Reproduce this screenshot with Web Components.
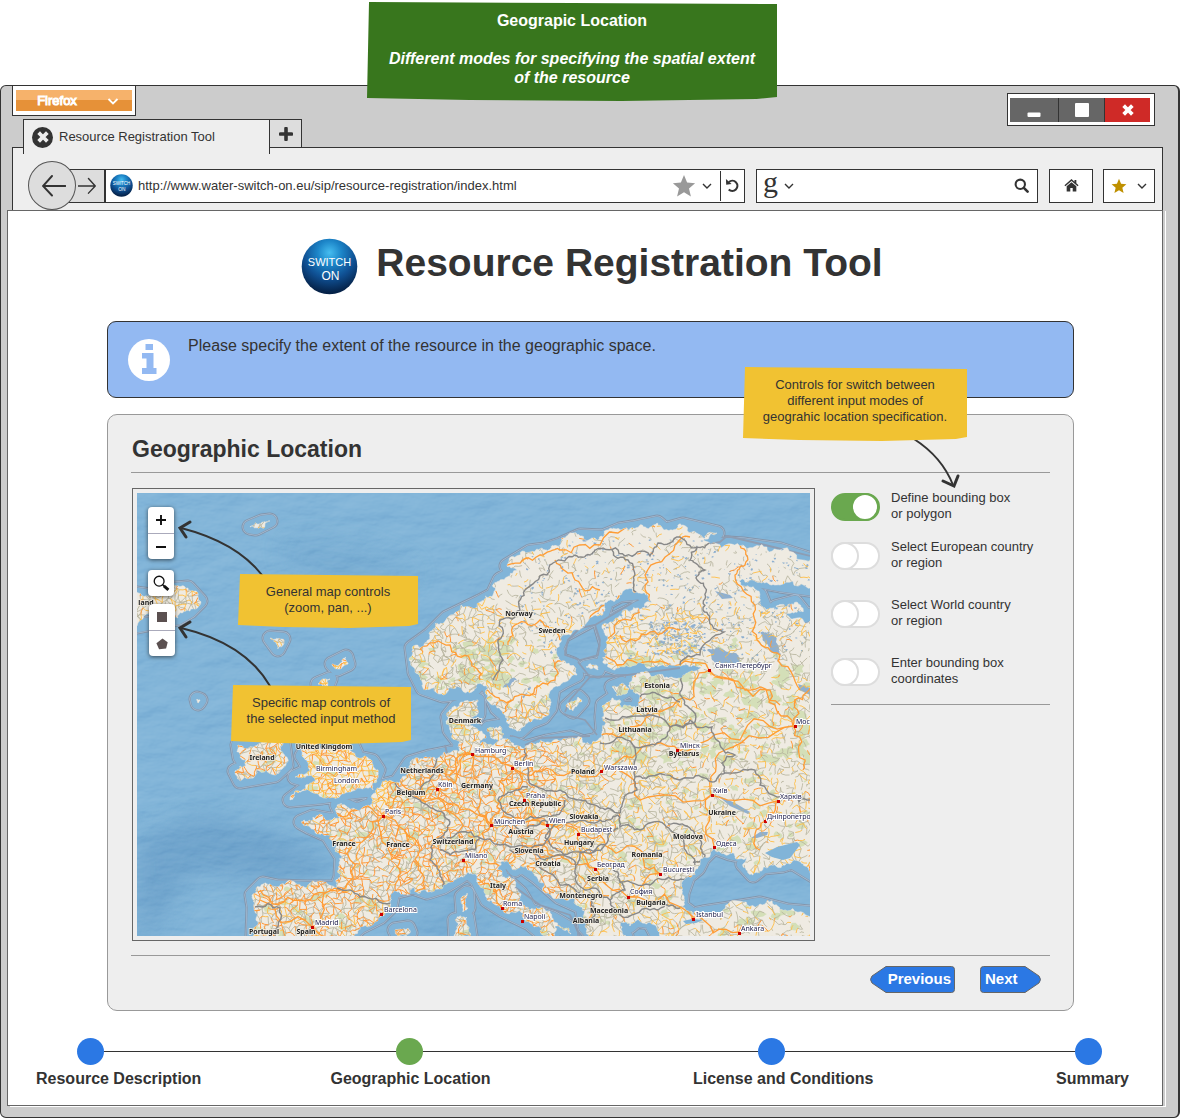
<!DOCTYPE html>
<html lang="en">
<head>
<meta charset="utf-8">
<title>Resource Registration Tool</title>
<style>
  body { margin: 0; background: #fff; color: #333; font: 13px/16px "Liberation Sans", Arial, sans-serif; }
</style>
</head>
<body>
<registration-app></registration-app>

<script>
const define = (name, html, setup) => {
  const tpl = document.createElement('template');
  tpl.innerHTML = html;
  customElements.define(name, class extends HTMLElement {
    connectedCallback() {
      if (this.shadowRoot) return;
      this.attachShadow({ mode: 'open' }).append(tpl.content.cloneNode(true));
      if (setup) setup(this, this.shadowRoot);
    }
  });
};

/* ---------- icons ---------- */
const ICONS = {
  chevron: ['0 0 12 12', '<path d="M2 4l4 4 4-4" fill="none" stroke="currentColor" stroke-width="1.4"/>'],
  boldchevron: ['0 0 12 12', '<path d="M1.500 4L6 8.500 10.500 4" fill="none" stroke="currentColor" stroke-width="1.800"/>'],
  star: ['0 0 24 24', '<path d="M12 1l3.1 7.6 8 .6-6.1 5.3 1.9 8L12 18.200l-6.900 4.300 1.900-8L.9 9.200l8-.6z" fill="currentColor"/>'],
  reload: ['0 0 16 16', '<path d="M4.200 4.300A5.400 5.400 0 1 1 4 12.200" fill="none" stroke="currentColor" stroke-width="2.300"/><path d="M1 1l.3 6.200 5.700-.8z" fill="currentColor"/>'],
  search: ['0 0 16 16', '<circle cx="6.700" cy="6.700" r="5" fill="none" stroke="currentColor" stroke-width="2.200"/><path d="M10.500 10.500l4 4" stroke="currentColor" stroke-width="2.800" stroke-linecap="round"/>'],
  lens: ['0 0 18 18', '<circle cx="6.500" cy="6.500" r="5.200" fill="none" stroke="currentColor" stroke-width="1.400"/><path d="M10 10l2 2" stroke="currentColor" stroke-width="1.500"/><path d="M11.500 11.500l4.800 4.300" stroke="currentColor" stroke-width="3"/>'],
  home: ['0 0 16 14', '<path d="M8 0L.4 6.800l1 1.100L8 2.200l6.600 5.700 1-1.100-2.400-2.100V1h-2v1.900z" fill="currentColor"/><path d="M8 3.400L2.800 7.900V13.500h3.900V9.600h2.600v3.900h3.900V7.900z" fill="currentColor"/>'],
  plus: ['0 0 14 14', '<path d="M7 1.500v11M1.500 7h11" stroke="currentColor" stroke-width="3.600" stroke-linecap="round"/>'],
  thinplus: ['0 0 12 12', '<path d="M6 1v10M1 6h10" stroke="currentColor" stroke-width="1.900"/>'],
  thinminus: ['0 0 12 12', '<path d="M1 6h10" stroke="currentColor" stroke-width="2"/>'],
  close: ['0 0 12 12', '<path d="M3 3l6 6M9 3l-6 6" stroke="currentColor" stroke-width="3.800" stroke-linecap="square"/>'],
  min: ['0 0 14 14', '<rect x=".5" y="9.500" width="13" height="4.500" rx="1" fill="currentColor"/>'],
  max: ['0 0 14 14', '<rect width="14" height="14" rx="1" fill="currentColor"/>'],
  back: ['0 0 24 22', '<path d="M23.500 11H1M10 1L1 11l9 9.500" fill="none" stroke="currentColor" stroke-width="1.900" stroke-linecap="round"/>'],
  square: ['0 0 12 12', '<rect x="1" y="1" width="10" height="10" fill="currentColor"/>'],
  pentagon: ['0 0 12 12', '<path d="M6.500 .5l5.200 3.700-1.600 6.300-7 .8L.4 5.300z" fill="currentColor"/>'],
  info: ['0 0 42 42', '<circle cx="21" cy="21" r="21" fill="#fff"/><path d="M17.500 5h7.500v6h-7.500zM14 14h11.500v15h3v6H14v-6h4.500v-9.500H14z" fill="#93b9f2"/>'],
};
define('ui-icon', `<style>
  :host { display: inline-block; flex: none; width: var(--w, 12px); height: var(--h, var(--w, 12px)); line-height: 0; }
  svg { display: block; width: 100%; height: 100%; }
</style><svg aria-hidden="true"></svg>`, (el, root) => {
  const [box, body] = ICONS[el.getAttribute('name')];
  const svg = root.querySelector('svg');
  svg.setAttribute('viewBox', box);
  svg.innerHTML = body;
});

define('switch-logo', `<style>
  :host { display: block; flex: none; width: var(--size); height: var(--size); }
  svg { display: block; width: 100%; height: 100%; }
  text { font-family: "Liberation Sans", sans-serif; fill: #fff; text-anchor: middle; }
</style>
<svg viewBox="0 0 56 57" role="img" aria-label="Switch On">
  <defs><radialGradient id="g" cx=".5" cy=".25" r=".72">
    <stop offset="0" stop-color="#46bdf0"/><stop offset=".3" stop-color="#1c85c8"/>
    <stop offset=".65" stop-color="#0f4f92"/><stop offset="1" stop-color="#052248"/>
  </radialGradient></defs>
  <circle cx="28" cy="28.500" r="27.800" fill="url(#g)"/>
  <text x="28" y="28" font-size="11">SWITCH</text><text x="29" y="42" font-size="12">ON</text>
</svg>`);

/* ---------- sticky note ---------- */
define('sticky-note', `<style>
  :host { display: block; box-sizing: border-box; padding: 10px 8px; text-align: center; color: #333;
    background: #f1c232; font-size: 13px; line-height: 16px;
    clip-path: polygon(2px 0, 50% 1px, 100% 2px, 100% calc(100% - 4px), 95% calc(100% - 2px), 62% 100%, 25% calc(100% - 1px), 0 calc(100% - 3px)); }
  :host([tone="green"]) { background: #38761d; color: #fff; font-size: 16px; line-height: 19px; font-weight: bold; padding: 9px 16px; }
</style><slot></slot>`);

/* ---------- browser chrome ---------- */
define('browser-window', `<style>
  :host { display: block; box-sizing: border-box; border: 1px solid #333; border-right-width: 2px; border-radius: 6px; background: #ccc; padding: 0 15px 11px 6px; }
  button { font: inherit; color: inherit; margin: 0; padding: 0; border: 0; background: none; display: flex; align-items: center; justify-content: center; }
  .title { display: flex; justify-content: space-between; align-items: flex-start; height: 33px; padding: 0 8px 0 5px; }
  .menu { border: 1px solid #333; border-top: 0; background: #fff; padding: 4px 3px; display: flex; }
  .menu button { width: 116px; height: 21px; gap: 30px; padding-left: 8px; color: #fff; font-size: 13px; line-height: 19px; -webkit-text-stroke: 1px #fff; background: linear-gradient(#f6b26b 48%, #e69138 48%); }
  .controls { display: flex; margin-top: 7px; border: 1px solid #333; background: #fff; padding: 4px 4px 3px 2px; }
  .controls button { box-sizing: border-box; width: 49px; height: 24px; background: #666; color: #fff; border-right: 1px solid #333; }
  .controls button + button { width: 46px; }
  .controls button:last-child { width: 45px; background: #cf2a27; border: 0; }
  .tabs { display: flex; align-items: flex-start; padding-left: 16px; position: relative; height: 28px; }
  .tab { box-sizing: border-box; width: 247px; height: 35px; border: 1px solid #333; border-bottom: 0; background: #eee; display: flex; align-items: center; gap: 6px; padding-left: 8px; }
  .tab button { width: 21px; height: 21px; border-radius: 50%; background: #333; color: #eee; }
  .tabs .add { width: 32px; height: 28px; border: 1px solid #333; border-width: 1px 1px 0 0; background: #ddd; }
  .bar { margin: 0 0 0 5px; box-sizing: border-box; height: 63px; border: 1px solid #333; border-bottom: 0; background: #eee; padding: 13px 7px 0 15px; display: flex; align-items: center; }
  .bar .back { box-sizing: border-box; width: 48px; height: 49px; flex: none; border: 1px solid #555; border-radius: 50%; background: #ddd; z-index: 1; padding-left: 3px; }
  .bar .fwd { box-sizing: border-box; width: 45px; height: 34px; margin-left: -16px; flex: none; border: 1px solid #333; background: #ddd; padding-left: 8px; }
  .fwd ui-icon { transform: scaleX(-1); }
  .field { box-sizing: border-box; height: 34px; border: 1px solid #333; background: #fff; display: flex; align-items: center; min-width: 0; }
  .url { flex: 634 1 0; padding-left: 4px; }
  .find { flex: 266 1 0; margin: 0 11px; padding: 0 8px 0 6px; }
  input { flex: 1; min-width: 0; border: 0; outline: 0; padding: 0; background: none; font: inherit; color: inherit; margin-left: 5px; }
  .url .reload { height: 30px; width: 24px; margin-left: 7px; border-left: 1px solid #333; }
  .g { font: 30px/20px "Liberation Serif", serif; padding-bottom: 7px; margin-right: 5px; }
  .bar .home { width: 44px; border: 1px solid #333; background: #fff; }
  .bar .marks { width: 52px; margin-left: 10px; gap: 9px; border: 1px solid #333; background: #fff; }
  .page { box-sizing: border-box; border: 1px solid #666; background: #fff; box-shadow: 2px 0 0 #ccc, 3px 1px 0 #fff; position: relative; }
</style>
<header class="title">
  <div class="menu"><button>Firefox <ui-icon name="boldchevron"></ui-icon></button></div>
  <div class="controls">
    <button aria-label="Minimise"><ui-icon name="min" style="--w:14px"></ui-icon></button>
    <button aria-label="Maximise"><ui-icon name="max" style="--w:14px"></ui-icon></button>
    <button aria-label="Close"><ui-icon name="close"></ui-icon></button>
  </div>
</header>
<div class="tabs">
  <div class="tab"><button aria-label="Close tab"><ui-icon name="close"></ui-icon></button><span>Resource Registration Tool</span></div>
  <button class="add" aria-label="New tab"><ui-icon name="plus" style="--w:14px"></ui-icon></button>
</div>
<div class="bar">
  <button class="back" aria-label="Back"><ui-icon name="back" style="--w:24px;--h:22px"></ui-icon></button>
  <button class="fwd" aria-label="Forward"><ui-icon name="back" style="--w:18px;--h:18px"></ui-icon></button>
  <div class="field url">
    <switch-logo style="--size:23px"></switch-logo>
    <input aria-label="Address" value="http://www.water-switch-on.eu/sip/resource-registration/index.html">
    <ui-icon name="star" style="--w:24px;color:#999"></ui-icon>
    <ui-icon name="chevron" style="margin-left:5px"></ui-icon>
    <button class="reload" aria-label="Reload"><ui-icon name="reload" style="--w:15px"></ui-icon></button>
  </div>
  <div class="field find">
    <span class="g">g</span><ui-icon name="chevron"></ui-icon>
    <input aria-label="Search">
    <ui-icon name="search" style="--w:15px"></ui-icon>
  </div>
  <button class="field home" aria-label="Home"><ui-icon name="home" style="--w:15px;--h:13px"></ui-icon></button>
  <button class="field marks" aria-label="Bookmarks"><ui-icon name="star" style="--w:16px;color:#bf9000"></ui-icon><ui-icon name="chevron"></ui-icon></button>
</div>
<main class="page"><slot></slot></main>`);

/* ---------- banner ---------- */
define('info-banner', `<style>
  :host { display: flex; align-items: flex-start; gap: 18px; box-sizing: border-box; border: 1px solid #333; border-radius: 9px; background: #93b9f2; padding: 17px 20px 16px; font-size: 16px; line-height: 19px; }
  p { margin: -3px 0 0; }
</style><ui-icon name="info" style="--w:42px"></ui-icon><p><slot></slot></p>`);

/* ---------- switch option ---------- */
define('mode-option', `<style>
  :host { display: block; }
  label { display: flex; gap: 11px; align-items: flex-start; }
  input { appearance: none; flex: none; position: relative; box-sizing: border-box; width: 49px; height: 28px; margin: 3px 0 0; border: 2px solid #ddd; border-radius: 14px; background: #fff; }
  input::before { content: ""; position: absolute; box-sizing: border-box; left: -2px; top: -2px; width: 28px; height: 28px; border: 2px solid #ddd; border-radius: 50%; background: #fff; }
  input:checked { background: #6aa84f; border-color: #6aa84f; }
  input:checked::before { left: auto; right: -1px; border-color: #6aa84f; }
</style><label><input type="checkbox" role="switch"><span><slot></slot></span></label>`, (el, root) => {
  root.querySelector('input').checked = el.hasAttribute('on');
});

/* ---------- arrow buttons ---------- */
define('arrow-button', `<style>
  :host { display: block; }
  button { display: grid; width: 85px; height: 27px; padding: 0; border: 0; background: none; color: #fff; font: bold 15px/26px "Liberation Sans", Arial, sans-serif; }
  svg, span { grid-area: 1 / 1; }
  svg { width: 100%; height: 27px; overflow: visible; }
  span { text-align: right; padding-right: 4px; z-index: 1; }
  :host([dir-next]) button { width: 61px; }
  :host([dir-next]) span { text-align: left; padding-left: 5px; }
</style><button><svg aria-hidden="true"><path fill="#2b78e4" stroke="#666"/></svg><span><slot></slot></span></button>`, (el, root) => {
  root.querySelector('path').setAttribute('d', el.hasAttribute('dir-next')
    ? 'M3.500 .5H45L59 10Q62 13.500 59 17L45 26.500H3.500Q.5 26.500 .5 23.500V3.500Q.5 .5 3.500 .5z'
    : 'M81.500 .5H16L2 10Q-1 13.500 2 17L16 26.500H81.500Q84.500 26.500 84.500 23.500V3.500Q84.500 .5 81.500 .5z');
});

/* ---------- progress ---------- */
define('step-progress', `<style>
  :host { display: block; }
  .track, .names { display: flex; align-items: center; }
  .track { padding: 0 60px 0 69px; }
  i { flex: none; width: 27px; height: 27px; border-radius: 50%; background: #2b78e4; }
  i.on { background: #6aa84f; }
  .track b { height: 1px; background: #333; }
  .names { margin-top: 4px; padding: 0 33px 0 28px; font: bold 16px/19px "Liberation Sans", Arial, sans-serif; white-space: nowrap; }
</style>
<div class="track"><i></i><b style="flex:292"></b><i class="on"></i><b style="flex:335"></b><i></i><b style="flex:290"></b><i></i></div>
<div class="names"><span>Resource Description</span><b style="flex:130"></b><span>Geographic Location</span><b style="flex:204"></b><span>License and Conditions</span><b style="flex:184"></b><span>Summary</span></div>`);

/* ---------- map ---------- */
define('europe-map', `<style>
  :host { display: block; position: relative; box-sizing: border-box; border: 1px solid #666; padding: 4px; align-self: start; }
  svg.map { display: block; width: 100%; aspect-ratio: 673 / 443; background: #81b4d8; }
  .c { font: bold 7px "Noto Sans", sans-serif; fill: #222; text-anchor: middle; paint-order: stroke; stroke: #f3efe6; stroke-width: 1.500px; }
  .t { font: 7px "Noto Sans", sans-serif; fill: #22224e; paint-order: stroke; stroke: #fff; stroke-width: 2px; }
  .tools { position: absolute; left: 15px; top: 18px; display: flex; flex-direction: column; }
  .tools div { width: 26px; border-radius: 4px; background: #fff; color: #111; box-shadow: 0 1px 4px rgba(0,0,0,.6); }
  .tools div + div { margin-top: 11px; }
  .tools div.draw { margin: 8px 0 0 1px; color: #5b5050; }
  .tools button { display: flex; align-items: center; justify-content: center; width: 26px; height: 26px; padding: 0; border: 0; background: none; color: inherit; }
  .tools button + button { border-top: 1px solid #aab; }
  .arrows { position: absolute; left: 0; top: 0; width: 290px; height: 210px; pointer-events: none; }
  sticky-note { position: absolute; width: 180px; }
</style>
<svg class="map" viewBox="137 493 673 443" preserveAspectRatio="xMidYMid slice" role="img" aria-label="Map of Europe">
  <defs>
    <filter id="relief" x="0" y="0" width="100%" height="100%" color-interpolation-filters="sRGB">
      <feTurbulence type="fractalNoise" baseFrequency=".022 .05" numOctaves="5" seed="8" result="n"/>
      <feDiffuseLighting in="n" surfaceScale="3" lighting-color="#fff"><feDistantLight azimuth="235" elevation="34"/></feDiffuseLighting>
    </filter>
    <filter id="soft"><feGaussianBlur stdDeviation="12"/></filter>
    <clipPath id="land"></clipPath>
  </defs>
  <rect x="137" y="493" width="673" height="443" fill="#81b4d8"/>
  <g filter="url(#soft)" fill="#5b92bf" opacity=".5">
    <path d="M200 815Q260 825 330 860L320 880Q250 880 190 870L150 936H137V840z"/>
    <path d="M280 540Q350 530 420 570L400 590Q330 600 290 570z" opacity=".4"/>
    <path d="M420 920L470 900 500 936H400z" opacity=".6"/>
  </g>
  <rect x="137" y="493" width="673" height="443" filter="url(#relief)" style="mix-blend-mode:soft-light" opacity=".22"/>
  <g id="shelf"></g>
  <g id="geo"></g>
  <g id="labels"></g>
</svg>
<div class="tools">
  <div><button aria-label="Zoom in"><ui-icon name="thinplus"></ui-icon></button><button aria-label="Zoom out"><ui-icon name="thinminus"></ui-icon></button></div>
  <div><button aria-label="Search"><ui-icon name="lens" style="--w:17px"></ui-icon></button></div>
  <div class="draw"><button aria-label="Draw rectangle"><ui-icon name="square"></ui-icon></button><button aria-label="Draw polygon"><ui-icon name="pentagon"></ui-icon></button></div>
</div>
<svg class="arrows" viewBox="0 0 290 210" fill="none" stroke="#333" stroke-width="2" stroke-linecap="round" aria-hidden="true">
  <path d="M129 86Q103 53 48 39"/><path d="M57 33L47 39 53 48" stroke-width="3"/>
  <path d="M137 197Q112 154 48 139"/><path d="M57 133L47 139 53 148" stroke-width="3"/>
</svg>
<sticky-note style="left:105px;top:85px;height:54px">General map controls<br>(zoom, pan, ...)</sticky-note>
<sticky-note style="left:98px;top:196px;height:59px">Specific map controls of<br>the selected input method</sticky-note>`, (el, root) => {
  let s = 20140;
  const rnd = () => { s |= 0; s = s + 0x6D2B79F5 | 0; let t = Math.imul(s ^ s >>> 15, 1 | s); t = t + Math.imul(t ^ t >>> 7, 61 | t) ^ t; return ((t ^ t >>> 14) >>> 0) / 4294967296; };
  const pts = str => str.trim().split(/\s+/).map(p => p.split(',').map(Number));
  const rough = (p, amp, closed, depth = 3) => {
    for (let d = 0; d < depth; d++) {
      const out = [];
      p.forEach((a, i) => {
        out.push(a);
        const b = p[i + 1] || (closed && p[0]);
        if (!b) return;
        const len = Math.hypot(b[0] - a[0], b[1] - a[1]), k = len * .6 * (rnd() - .5) * amp;
        if (len > 1.5) out.push([(a[0] + b[0]) / 2 + (a[1] - b[1]) / len * k, (a[1] + b[1]) / 2 + (b[0] - a[0]) / len * k]);
      });
      p = out;
    }
    return p;
  };
  const path = (p, closed) => 'M' + p.map(q => q[0].toFixed(1) + ' ' + q[1].toFixed(1)).join('L') + (closed ? 'z' : '');

  const lands = [
    '253,950 253,936 254,907 252,895 263,884 277,887 307,888 337,888 341,877 342,857 333,843 328,835 310,827 301,822 313,817 330,820 343,818 337,805 345,805 357,810 372,804 377,788 397,782 410,763 430,757 450,753 458,752 460,743 450,730 448,717 456,707 478,700 478,714 470,725 478,731 486,738 480,744 497,742 513,743 525,748 547,742 570,738 583,743 598,740 603,730 602,717 603,705 613,698 622,708 636,708 640,697 630,688 632,678 657,675 683,675 708,671 700,667 683,665 647,668 617,668 603,663 607,645 602,628 617,618 637,608 652,602 640,593 620,595 607,602 603,613 587,622 563,635 557,648 560,660 573,665 577,675 563,682 553,688 550,708 543,717 530,722 520,731 510,728 505,715 497,708 487,685 480,683 472,692 443,695 423,688 415,672 412,648 430,635 447,618 480,602 493,595 500,580 518,570 507,566 530,552 545,550 560,545 580,536 603,537 620,530 633,528 657,523 665,530 683,525 717,533 700,542 743,545 780,550 830,566 830,592 780,585 753,580 738,580 760,595 766,610 785,608 797,618 830,610 830,885 810,873 792,862 783,865 763,867 753,875 743,864 747,857 730,853 714,847 703,858 698,868 688,876 682,893 681,906 693,915 703,913 723,910 760,904 787,911 830,915 830,950 665,950 650,922 637,920 630,926 620,923 626,936 626,950 600,950 593,936 585,927 582,907 560,897 537,877 520,865 515,870 507,860 498,867 502,877 520,893 530,910 552,918 569,928 571,934 555,926 553,936 545,936 530,923 503,910 487,900 477,880 468,872 460,877 443,887 427,892 413,887 393,892 390,907 380,917 360,927 350,936 345,950',
    '302,756 312,740 350,740 358,758 372,761 378,770 372,784 373,790 345,793 322,797 290,800 305,789 318,784 295,777 310,770 303,757',
    '238,745 262,742 283,742 286,765 275,775 240,781 235,771 246,766 240,757',
    '130,593 150,596 165,590 188,588 200,601 190,611 178,618 137,626 130,622',
    '462,897 467,893 468,908 463,912', '455,920 467,917 470,936 456,940', '567,707 578,697 582,701 573,711',
    '612,687 622,683 629,689 617,696', '332,664 346,657 348,664 337,669', '318,684 330,679 327,686', '270,638 283,639 278,649',
    '250,527 262,522 270,521 256,528', '395,930 408,928 410,933 398,936', '488,728 500,726 504,734 494,739',
    '776,607 795,602 803,612 786,614', '197,699 200,700 198,703', '586,667 596,665 598,670'
  ].map(pts);
  const coast = lands.map((p, i) => path(rough(p, i === 0 ? 1 : .9, true, 4), true)).join('');
  const smooth = lands.map(p => path(p, true)).join('');
  root.querySelector('#land').innerHTML = `<path d="${coast}"/>`;

  const density = (x, y) => {
    if (y < 600 && x > 480) return .2;
    if (x < 400 && y < 800) return 1;
    if (x > 590 && x < 700 && y < 690 && y > 605) return .6;
    if (x < 500 && y < 690) return .7;
    if (y < 700) return .38;
    if (x > 690) return .45;
    if (x > 600) return .65;
    if (x > 540) return .85;
    return 1;
  };
  const step = 4.6, cols = 150, rows = 99, P = [];
  for (let j = 0; j < rows; j++) { P[j] = []; for (let i = 0; i < cols; i++) P[j][i] = [134 + i * step + (rnd() - .5) * 5, 490 + j * step + (rnd() - .5) * 5]; }
  const L = { grey: '', yellow: '', orange: '' };
  for (let j = 0; j < rows - 1; j++) for (let i = 1; i < cols - 1; i++) {
    const a = P[j][i], d = density(a[0], a[1]);
    [P[j][i + 1], P[j + 1][i], P[j + 1][i + 1], P[j + 1][i - 1]].forEach((b, k) => {
      if (rnd() > d * (k < 2 ? .78 : .25)) return;
      const r = rnd(), uk = a[0] < 390 && a[1] < 803 && a[0] > 290, west = a[0] < 560 && a[1] > 745, finn = a[0] > 595 && a[0] < 700 && a[1] < 670 && a[1] > 610;
      const name = uk ? (r < .75 ? 'yellow' : 'orange') : west ? (r < .52 ? 'grey' : r < .62 ? 'yellow' : 'orange') : finn ? (r < .5 ? 'grey' : 'yellow') : r < .68 ? 'grey' : r < .94 ? 'yellow' : 'orange';
      L[name] += `M${a[0].toFixed(1)} ${a[1].toFixed(1)}L${((a[0] + b[0]) / 2 + rnd() * 2 - 1).toFixed(1)} ${((a[1] + b[1]) / 2 + rnd() * 2 - 1).toFixed(1)}L${b[0].toFixed(1)} ${b[1].toFixed(1)}`;
    });
  }
  const blob = (x, y, r) => { const q = []; for (let k = 0; k < 9; k++) { const t = k / 9 * 6.283, m = r * (.4 + rnd() * .8); q.push([x + Math.cos(t) * m * 1.4, y + Math.sin(t) * m]); } return path(q, true); };
  let green = '', lakes = '';
  for (let k = 0; k < 700; k++) green += blob(250 + rnd() * 560, 640 + rnd() * 296, 1 + rnd() * 4);
  for (let k = 0; k < 110; k++) green += blob(620 + rnd() * 190, 660 + rnd() * 100, 2 + rnd() * 5);
  for (let k = 0; k < 50; k++) green += blob(460 + rnd() * 50, 640 + rnd() * 45, 2 + rnd() * 4);
  for (let k = 0; k < 520; k++) lakes += blob(520 + rnd() * 290, 540 + rnd() * 120, .4 + rnd() * .9);
  for (let k = 0; k < 150; k++) lakes += blob(650 + rnd() * 55, 622 + rnd() * 32, .5 + rnd() * 1.2);
  lakes += path(rough(pts('707,650 718,647 735,653 739,662 725,665 712,660'), .7, true), true)
    + path(rough(pts('760,633 772,634 778,645 781,655 772,653 765,643'), .8, true), true)
    + path(rough(pts('503,688 512,678 518,680 510,688'), .8, true), true) + path(rough(pts('522,697 530,685 531,688 524,700'), .7, true), true)
    + path(pts('715,591 730,595 733,598 722,599'), true) + path(pts('798,684 810,688 810,695 800,690'), true)
    + path(pts('717,795 735,803 750,812 748,814 730,806'), true) + path(pts('751,838 760,832 768,832 767,835 757,838'), true);
  const ways = ['383,816 410,790 437,788 472,754 512,767 552,770 601,771 650,745 677,749 740,740 793,726', '383,816 350,840 345,888 312,927', '383,816 420,850 425,888 382,913', '383,816 400,860 395,885', '383,816 350,812 320,822', '491,824 546,825 579,833 595,868 628,897 693,917 739,932', '462,860 480,880 501,906 522,921', '437,788 460,810 491,824 462,860', '472,754 480,790 491,824', '512,767 500,800 491,824', '512,767 524,799 546,825', '601,771 640,800 711,795 777,801', '711,795 714,846', '711,795 725,750 793,726', '793,726 795,700 810,680', '793,726 770,690 709,670', '793,726 805,760 803,770', '777,801 765,821 760,850', '709,670 660,661 617,665 605,640 640,612', '709,670 690,700 645,720 600,735', '709,670 745,690 780,705', '487,690 500,700 525,695 555,680 565,660', '480,680 470,660 450,645 420,650', '512,700 505,712', '595,868 560,855 520,850 485,862', '661,874 628,897', '661,874 640,850 600,835 579,833', '650,602 645,575 675,545 690,537', '560,640 590,622 605,605 635,592', '560,640 540,620 515,625 508,645', '740,545 745,565 735,575 755,605 757,640 780,655 800,690', '260,890 300,900 340,890', '312,927 260,900', '312,927 380,914', '680,630 650,632 620,635', '555,560 575,580 600,590', '507,565 540,555 560,550 600,545 655,527', '400,780 430,800 460,840', '472,754 450,775 425,770'].map(w => path(rough(pts(w), .9))).join('');
  const borders = ['493,680 503,660 498,640 500,620 520,610 525,590 547,575 553,563 575,555 590,555 595,550 603,548 625,556 650,556 658,543 680,537 697,547', '612,550 628,560 634,580 637,600', '697,547 690,560 705,570 696,578 706,592 703,610 712,625 724,632 700,655 680,665', '683,675 680,695 685,705 695,722 670,727', '640,697 660,695 680,702', '605,718 640,716 670,727 655,745 633,745 600,743', '670,727 690,720 712,727 720,745 735,755 722,763 725,773 712,782 690,778 650,776 635,777', '633,745 635,777 637,790 622,805 620,813', '525,748 528,775 533,785 560,790 580,800 600,808 620,813', '528,787 508,792 498,800 505,812 525,820 550,817 565,800', '545,838 552,828 575,822 600,820 618,815', '492,825 520,830 545,820 550,830 540,845 500,845 480,838', '618,828 605,845 580,852 555,848 545,838', '618,815 620,827 640,830 665,825 680,835 690,855 695,865', '668,824 690,828 700,840 705,855 693,862', '610,865 620,882 650,885 675,880 690,877', '605,845 580,853 575,870 585,890 610,900 625,890 620,882', '510,850 530,850 545,860 560,855 575,865', '535,865 560,885 580,893', '590,895 595,915 585,925', '610,900 620,915 650,910 665,905 680,908', '725,773 755,770 760,785 790,795 810,800', '395,783 420,800 435,810', '437,757 430,780 420,790', '435,810 450,822 440,838 430,860 440,875 443,887', '440,838 460,832 480,838 475,850 450,855 440,850', '337,888 360,897 392,903', '255,907 280,908 275,936', '696,547 712,543 727,534'].map(w => path(rough(pts(w), .7))).join('');
  const marine = ['697,547 720,542 727,536', '595,625 600,640 598,655 580,660 565,655 568,640 580,628 595,625 612,615 632,603', '578,662 590,677 620,676 680,668', '590,677 570,700 565,712', '563,714 585,720 597,735', '445,745 448,757 425,762', '525,745 540,738 590,736', '505,880 540,905 570,915 580,936', '727,536 765,545 810,556', '700,935 690,918'].map(w => path(pts(w))).join('');

  root.querySelector('#shelf').innerHTML = `
    <g fill="none" stroke-linejoin="round">
      <path d="${smooth}" stroke="#8496ac" stroke-width="17"/><path d="${smooth}" stroke="#a9c4dc" stroke-width="15"/>
      <path d="${smooth}" stroke="#8d9db3" stroke-width="14"/><path d="${smooth}" stroke="#81b4d8" stroke-width="12.500"/>
      <path d="${marine}" stroke="#8d9db3" stroke-width="1.800"/>
    </g>`;
  root.querySelector('#geo').innerHTML = `
    <path d="${coast}" fill="#efebe2" stroke="#efebe2" stroke-width=".5"/>
    <g clip-path="url(#land)" fill="none">
      <path d="${green}" fill="#cbdba9" opacity=".75"/>
      <path d="${lakes}" fill="#8fb0d0"/>
      <path d="${L.grey}" stroke="#b5b29c" stroke-width=".8"/>
      <path d="${L.yellow}" stroke="#ffbd45" stroke-width=".9"/>
      <path d="${L.orange}" stroke="#ff9838" stroke-width="1"/>
      <path d="${ways}" stroke="#ff9d35" stroke-width="1.300"/>
      <path d="${borders}" stroke="#888" stroke-width="1.400"/>
    </g>
    <path d="M765 853L777 847 797 842 800 845 790 858 783 860 772 857z" fill="#81b4d8"/>
    <path d="M683 921L692 919 703 920 696 923 686 924z" fill="#81b4d8"/>`;

  const countries = [['Norway', 519, 616], ['Sweden', 552, 633], ['Estonia', 657, 688], ['Latvia', 647, 712], ['Lithuania', 635, 732], ['Denmark', 465, 723], ['Byelarus', 684, 756], ['United Kingdom', 324, 749], ['Ireland', 262, 760], ['Netherlands', 422, 773], ['Belgium', 411, 795], ['Germany', 477, 788], ['Poland', 583, 774], ['Czech Republic', 535, 806], ['Slovakia', 584, 819], ['Austria', 521, 834], ['Hungary', 579, 845], ['Slovenia', 529, 853], ['Croatia', 548, 866], ['Switzerland', 453, 844], ['France', 344, 846], ['France', 398, 847], ['Ukraine', 722, 815], ['Moldova', 688, 839], ['Romania', 647, 857], ['Serbia', 598, 881], ['Montenegro', 581, 898], ['Macedonia', 609, 913], ['Albania', 586, 923], ['Bulgaria', 651, 905], ['Italy', 498, 888], ['Spain', 306, 934], ['Portugal', 264, 934], ['land', 146, 605]];
  const cities = [['Birmingham', 316, 771, 0], ['London', 334, 783, 0], ['Hamburg', 475, 753, 472, 754], ['Berlin', 514, 766, 512, 768], ['Warszawa', 604, 770, 601, 771], ['Praha', 526, 798, 524, 800], ['München', 494, 824, 491, 825], ['Wien', 549, 823, 547, 825], ['Budapest', 581, 832, 578, 834], ['Köln', 438, 787, 437, 789], ['Paris', 385, 814, 383, 816], ['Milano', 465, 858, 463, 860], ['Madrid', 315, 925, 312, 927], ['Barcelona', 384, 912, 381, 914], ['Roma', 503, 906, 502, 908], ['Napoli', 524, 919, 522, 921], ['Београд', 597, 867, 595, 869], ['София', 630, 894, 628, 897], ['București', 663, 872, 660, 874], ['Istanbul', 696, 917, 693, 919], ['Ankara', 741, 931, 739, 933], ['Одеса', 716, 846, 714, 847], ['Київ', 713, 793, 712, 795], ['Харків', 780, 799, 778, 801], ['Дніпропетро', 767, 819, 765, 821], ['Мос', 796, 724, 795, 726], ['Мінск', 680, 748, 677, 750], ['Санкт-Петербург', 715, 668, 709, 670]];
  root.querySelector('#labels').innerHTML = countries.map(([n, x, y]) => `<text class="c" x="${x}" y="${y}">${n}</text>`).join('')
    + cities.map(([n, x, y, a, b]) => (a ? `<rect x="${a - 1}" y="${b - 1}" width="3" height="3" fill="#c00"/>` : '') + `<text class="t" x="${x}" y="${y}">${n}</text>`).join('');
});

/* ---------- location panel ---------- */
define('location-panel', `<style>
  :host { display: block; position: relative; box-sizing: border-box; border: 1px solid #999; border-radius: 10px; background: #eee; padding: 20px 23px 17px; }
  h2 { margin: 0; padding: 0 0 9px 1px; border-bottom: 1px solid #999; font-size: 23px; line-height: 28px; }
  .body { display: grid; grid-template-columns: minmax(0, 1fr) 219px; column-gap: 16px; margin-top: 15px; padding-left: 1px; }
  .modes { align-self: start; padding: 2px 0 17px; border-bottom: 1px solid #999; }
  .modes mode-option + mode-option { margin-top: 26px; }
  .modes mode-option:nth-child(2) { margin-top: 17px; }
  footer { display: flex; justify-content: flex-end; gap: 25px; margin-top: 14px; border-top: 1px solid #999; padding: 10px 9px 0 0; }
  sticky-note { position: absolute; right: 106px; top: -48px; width: 224px; height: 74px; }
  .arrow { position: absolute; right: 106px; top: 20px; width: 60px; height: 60px; }
</style>
<h2>Geographic Location</h2>
<div class="body">
  <europe-map></europe-map>
  <div class="modes">
    <mode-option on>Define bounding box<br>or polygon</mode-option>
    <mode-option>Select European country<br>or region</mode-option>
    <mode-option>Select World country<br>or region</mode-option>
    <mode-option>Enter bounding box<br>coordinates</mode-option>
  </div>
</div>
<footer><arrow-button>Previous</arrow-button><arrow-button dir-next>Next</arrow-button></footer>
<svg class="arrow" viewBox="0 0 60 60" fill="none" stroke="#333" stroke-width="2" stroke-linecap="round" aria-hidden="true"><path d="M7 4Q35 22 46 50"/><path d="M36 46L47 51 51 41" stroke-width="3"/></svg>
<sticky-note>Controls for switch between<br>different input modes of<br>geograhic location specification.</sticky-note>`);

define('registration-app', `<style>
  :host { display: block; position: relative; padding-top: 85px; }
  .banner { position: absolute; left: 367px; top: 2px; width: 410px; height: 99px; }
  .banner em { display: block; margin-top: 19px; }
  .head { display: flex; justify-content: center; align-items: center; gap: 18px; padding: 27px 0 0 14px; }
  h1 { margin: 0; font-size: 39px; line-height: 50px; padding-bottom: 7px; }
  .content { margin: 0 88px 0 99px; }
  location-panel { margin-top: 16px; }
  info-banner { margin-top: 26px; }
  step-progress { margin-top: 27px; padding-bottom: 17px; }
</style>
<browser-window>
  <div class="head"><switch-logo style="--size:57px"></switch-logo><h1>Resource Registration Tool</h1></div>
  <div class="content">
    <info-banner>Please specify the extent of the resource in the geographic space.</info-banner>
    <location-panel></location-panel>
  </div>
  <step-progress></step-progress>
</browser-window>
<sticky-note class="banner" tone="green">Geograpic Location<em>Different modes for specifying the spatial extent of the resource</em></sticky-note>`);
</script>
</body>
</html>
